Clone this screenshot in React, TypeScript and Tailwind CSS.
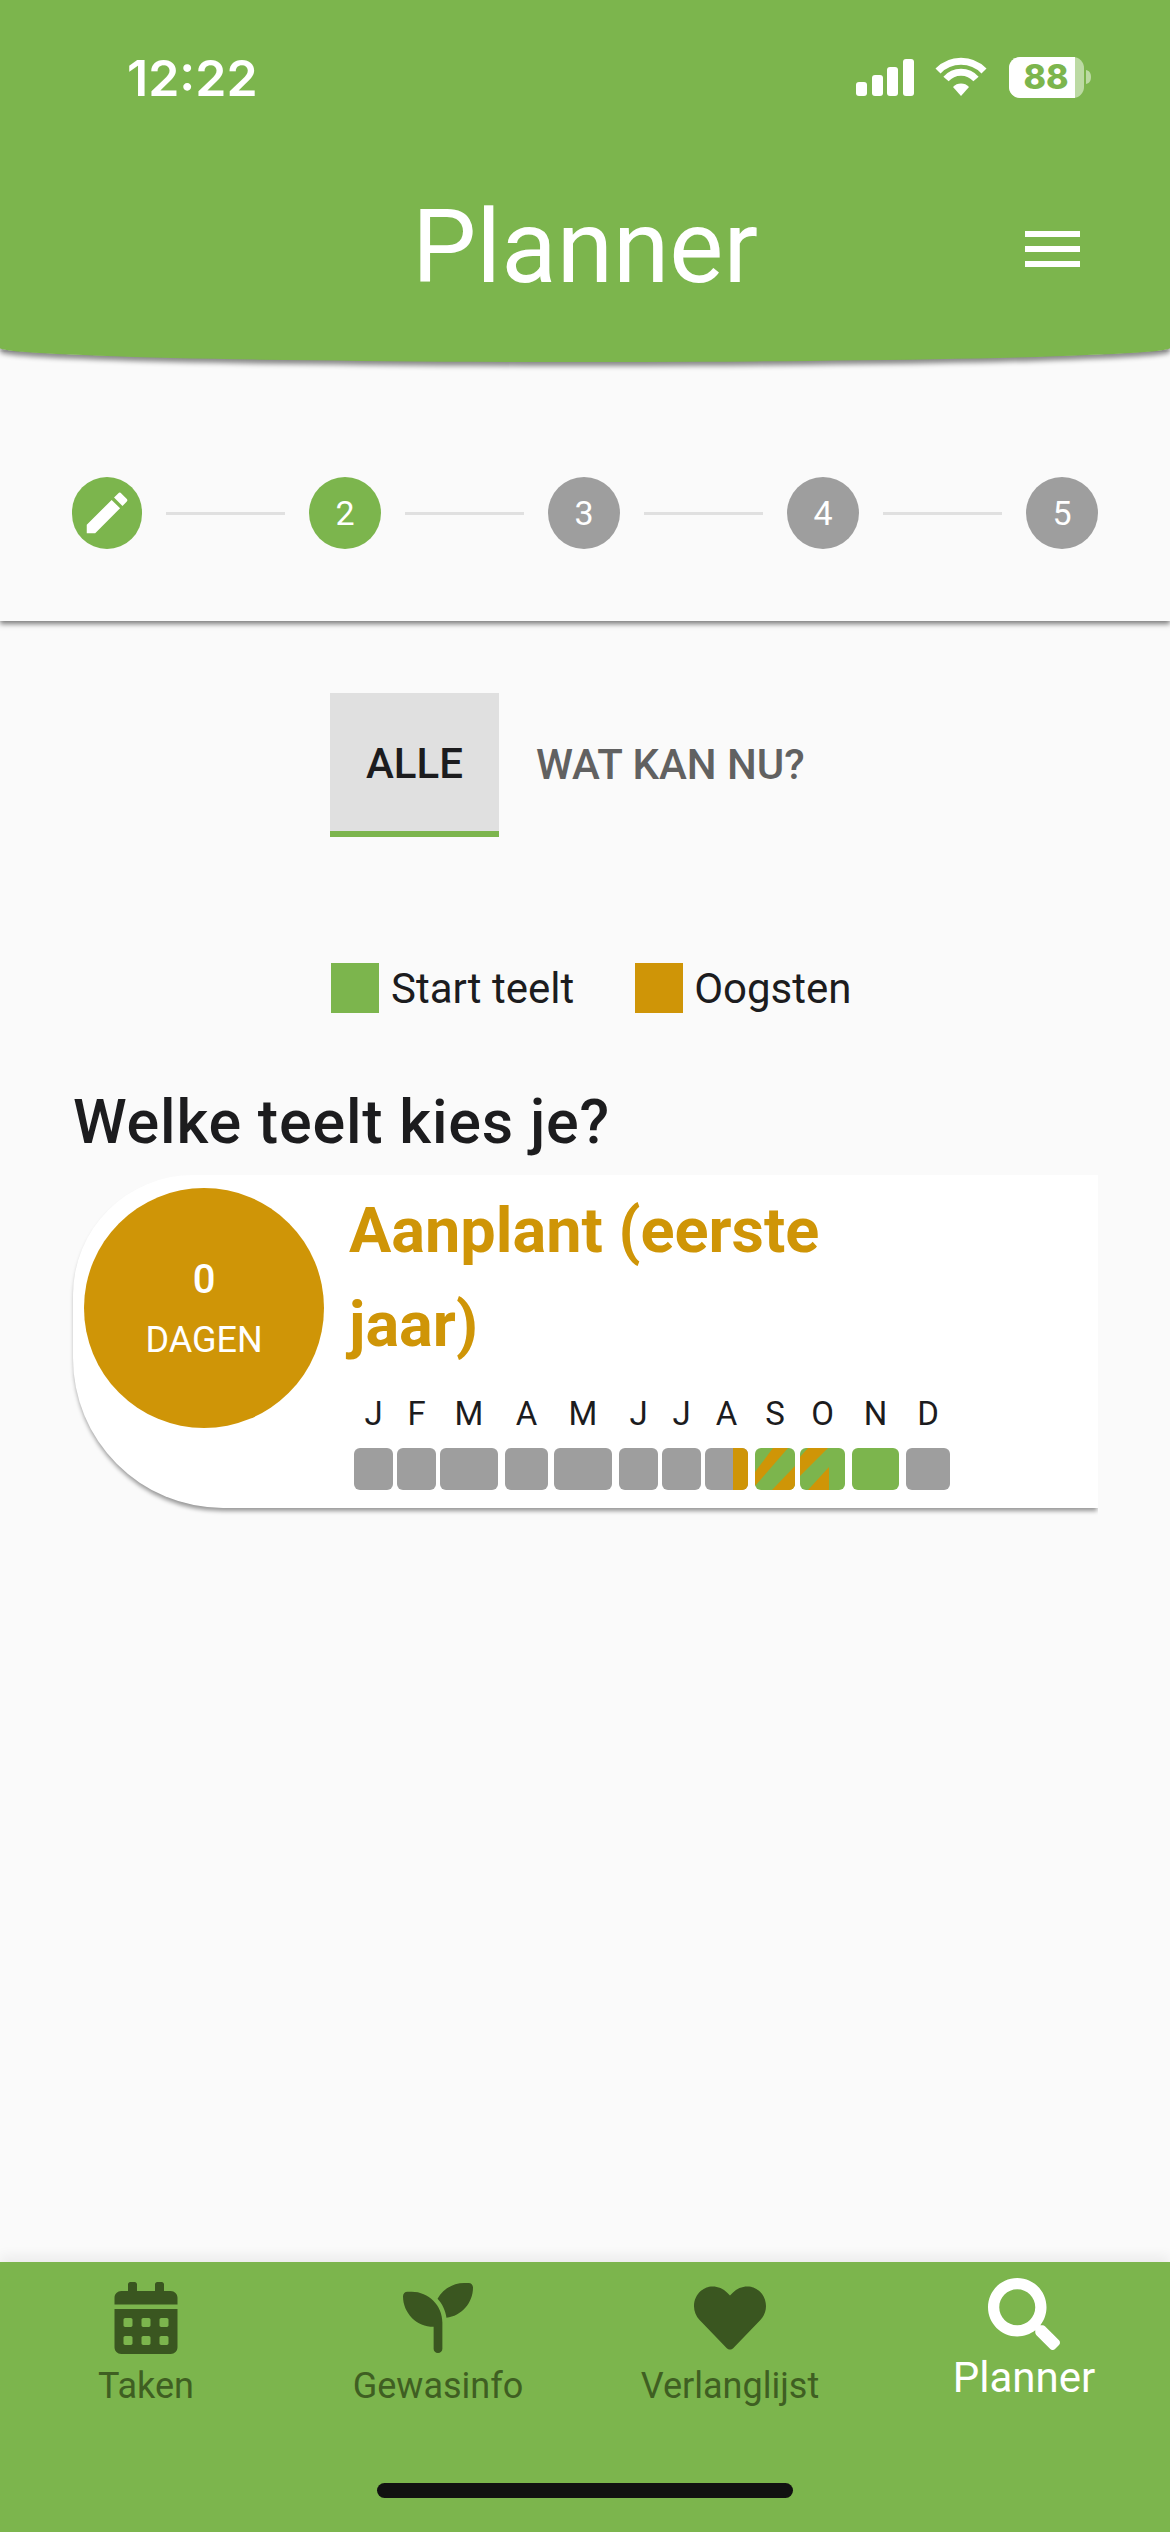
import { FaCalendarAlt, FaHeart, FaSearch } from "react-icons/fa";
import { FaSeedling } from "react-icons/fa6";

const months = [
  { letter: "J", width: "w-[39px]", gap: "mr-[4px]", bar: "gray" },
  { letter: "F", width: "w-[39px]", gap: "mr-[4px]", bar: "gray" },
  { letter: "M", width: "w-[58px]", gap: "mr-[7px]", bar: "gray" },
  { letter: "A", width: "w-[43px]", gap: "mr-[6px]", bar: "gray" },
  { letter: "M", width: "w-[58px]", gap: "mr-[7px]", bar: "gray" },
  { letter: "J", width: "w-[39px]", gap: "mr-[4px]", bar: "gray" },
  { letter: "J", width: "w-[39px]", gap: "mr-[4px]", bar: "gray" },
  { letter: "A", width: "w-[43px]", gap: "mr-[7px]", bar: "split" },
  { letter: "S", width: "w-[40px]", gap: "mr-[5px]", bar: "stripes" },
  { letter: "O", width: "w-[45px]", gap: "mr-[7px]", bar: "stripes2" },
  { letter: "N", width: "w-[47px]", gap: "mr-[7px]", bar: "green" },
  { letter: "D", width: "w-[44px]", gap: "", bar: "gray" },
];

const MonthBar = ({ type }: { type: string }) => {
  if (type === "gray") return <div className="h-[42px] rounded-[6px] bg-[#9e9e9e]" />;
  if (type === "green") return <div className="h-[42px] rounded-[6px] bg-[#7cb54d]" />;
  if (type === "split")
    return (
      <div className="flex h-[42px] overflow-hidden rounded-[6px] bg-[#9e9e9e]">
        <div className="w-[28px]" />
        <div className="flex-1 bg-[#cf9507]" />
      </div>
    );
  return (
    <div className="h-[42px] overflow-hidden rounded-[6px] bg-[#7cb54d]">
      {type === "stripes" ? (
        <svg width="40" height="42" viewBox="0 0 40 42" className="block">
          <polygon points="18,0 33,0 0,38 0,24" fill="#cf9507" />
          <polygon points="40,18 40,42 17,42" fill="#cf9507" />
        </svg>
      ) : (
        <svg width="45" height="42" viewBox="0 0 45 42" className="block">
          <polygon points="8,0 28,0 0,28 0,9" fill="#cf9507" />
          <polygon points="29,19 29,42 8,42" fill="#cf9507" />
        </svg>
      )}
    </div>
  );
};

const steps = ["2", "3", "4", "5"];

const Tab = ({ icon, label, active }: { icon: React.ReactNode; label: string; active?: boolean }) => (
  <div
    className={`flex w-[292px] flex-col items-center ${
      active ? "ml-[2px] pt-[16px] text-white" : "pt-[20px] text-[#3a5620]"
    }`}
  >
    <div className="flex h-[72px] items-center justify-center">{icon}</div>
    <div className={active ? "mt-[6px] text-[42px] leading-[44px] text-white" : "mt-[11px] text-[36px] leading-[42px] text-[#3f5f22]"}>
      {label}
    </div>
  </div>
);

export default function App() {
  return (
    <div className="flex h-[2532px] w-[1170px] flex-col overflow-hidden bg-[#fafafa] font-['Roboto',sans-serif] text-[#1c1c1e]">
      <header className="relative z-20 h-[362px] shrink-0 rounded-b-[585px_14px] bg-[#7cb54d] px-[127px] text-white shadow-[0_4px_5px_rgba(0,0,0,0.45)]">
        <div className="flex h-[156px] items-center justify-between">
          <span className="font-['Inter',sans-serif] text-[50px] font-semibold">12:22</span>
          <svg width="240" height="40" viewBox="0 0 240 40" className="mr-[-50px] overflow-visible">
            <g fill="#fff">
              <rect x="3" y="24" width="11" height="14" rx="3" />
              <rect x="19" y="17" width="11" height="21" rx="3" />
              <rect x="34" y="9" width="11" height="29" rx="3" />
              <rect x="50" y="1" width="11" height="37" rx="3" />
            </g>
            <path d="M85 13a32 32 0 0 1 46 0M93 21a20 20 0 0 1 30 0" fill="none" stroke="#fff" strokeWidth="7" />
            <path d="M100 29a11 11 0 0 1 16 0l-8 9z" fill="#fff" />
            <rect x="156" y="-1" width="75" height="41" rx="11" fill="#bcdaa3" />
            <path d="M167 -1h55v41h-55a11 11 0 0 1-11-11v-19a11 11 0 0 1 11-11z" fill="#fff" />
            <path d="M233 12c4 1 5 4 5 7s-1 6-5 7z" fill="#bcdaa3" />
            <text x="193" y="31" textAnchor="middle" fontFamily="Inter" fontWeight="800" fontSize="34" fill="#7cb54d">
              88
            </text>
          </svg>
        </div>
        <h1 className="mt-[41px] text-center text-[102px] leading-[100px] font-normal">Planner</h1>
        <div className="absolute top-[231px] right-[90px] flex w-[55px] flex-col gap-[9px]">
          <div className="h-[6px] bg-white" />
          <div className="h-[6px] bg-white" />
          <div className="h-[6px] bg-white" />
        </div>
      </header>

      <section className="relative z-10 -mt-[10px] flex h-[269px] shrink-0 items-start bg-[#fafafa] px-[72px] pt-[125px] shadow-[0_3px_5px_rgba(0,0,0,0.5)]">
        <div className="flex h-[72px] w-[72px] items-center justify-center rounded-full bg-[#7cb54d]">
          <svg width="54" height="54" viewBox="0 0 24 24" fill="#fff">
            <path d="M3 17.25V21h3.75L17.81 9.94l-3.75-3.75L3 17.25zM20.71 7.04a1 1 0 0 0 0-1.41l-2.34-2.34a1 1 0 0 0-1.41 0l-1.83 1.83 3.75 3.75 1.83-1.83z" />
          </svg>
        </div>
        {steps.map((s, i) => (
          <div key={s} className="flex items-center">
            <div className="mx-[24px] h-[3px] w-[119px] bg-[#e0e0e0]" />
            <div
              className={`flex h-[72px] w-[72px] items-center justify-center rounded-full text-[34px] text-white ${
                i === 0 ? "bg-[#7cb54d]" : "bg-[#9e9e9e]"
              }`}
            >
              {s}
            </div>
          </div>
        ))}
      </section>

      <main className="flex-1">
        <div className="mt-[72px] ml-[330px] flex">
          <div className="flex h-[144px] w-[169px] items-center justify-center border-b-[6px] border-[#7cb54d] bg-[#e0e0e0] pt-[3px] text-[42px] font-medium text-[#1c1c1e]">
            ALLE
          </div>
          <div className="flex h-[144px] items-center pt-[1px] pb-[3px] pl-[37px] text-[42px] font-medium text-[#616161]">
            WAT KAN NU?
          </div>
        </div>

        <div className="mt-[126px] ml-[331px] flex h-[50px] items-center text-[42px]">
          <div className="h-[50px] w-[48px] bg-[#7cb54d]" />
          <span className="ml-[12px]">Start teelt</span>
          <div className="ml-[61px] h-[50px] w-[48px] bg-[#cf9507]" />
          <span className="ml-[11px]">Oogsten</span>
        </div>

        <h2 className="mt-[75px] ml-[73px] text-[61px] leading-[68px] font-medium tracking-[0.8px]">
          Welke teelt kies je?
        </h2>

        <div className="mt-[19px] ml-[60px] w-[1038px] overflow-hidden pb-[12px] pl-[13px]">
          <article className="flex h-[333px] w-[1025px] rounded-l-[120px] rounded-bl-[150px] bg-white shadow-[0_4px_4px_-1px_rgba(0,0,0,0.4)]">
            <div className="mt-[13px] ml-[11px] flex h-[240px] w-[240px] shrink-0 flex-col items-center justify-center rounded-full bg-[#cf9507] text-white">
              <span className="text-[40px] leading-[46px] font-medium">0</span>
              <span className="mt-[17px] text-[36px] leading-[40px]">DAGEN</span>
            </div>
            <div className="ml-[25px] pt-[9px]">
              <div className="w-[520px] text-[63px] leading-[94px] font-bold text-[#cf9507]">
                Aanplant (eerste jaar)
              </div>
              <div className="mt-[23px] ml-[5px] flex">
                {months.map((m, i) => (
                  <div key={i} className={`${m.width} ${m.gap}`}>
                    <div className="mb-[15px] text-center text-[33px] leading-[38px] text-[#1c1c1e]">{m.letter}</div>
                    <MonthBar type={m.bar} />
                  </div>
                ))}
              </div>
            </div>
          </article>
        </div>
      </main>

      <nav className="h-[270px] shrink-0 bg-[#7cb54d] shadow-[0_-6px_12px_rgba(0,0,0,0.06)]">
        <div className="flex">
          <Tab icon={<FaCalendarAlt size={72} />} label="Taken" />
          <Tab icon={<FaSeedling size={70} />} label="Gewasinfo" />
          <Tab icon={<FaHeart size={72} />} label="Verlanglijst" />
          <Tab icon={<FaSearch size={72} />} label="Planner" active />
        </div>
        <div className="mx-auto mt-[76px] h-[15px] w-[416px] rounded-full bg-[#111111]" />
      </nav>
    </div>
  );
}
